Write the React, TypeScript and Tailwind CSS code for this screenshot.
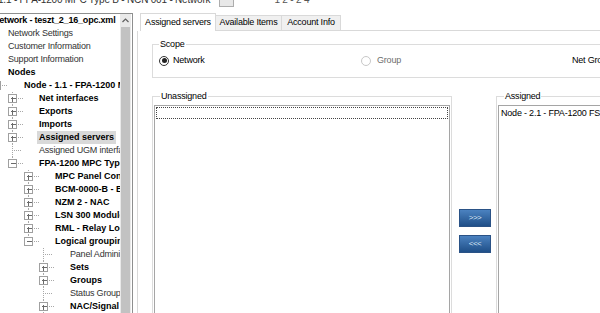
type Conn = 'plus' | 'minus' | 'leaf' | 'none';
type Span = 'full' | 'top' | 'none';

interface TreeRow {
  text: string;
  level: number;
  conn: Conn;
  span: Span;
  bold: boolean;
  selected?: boolean;
}

// text start x per level, and connector center (textX - 27)
const textX: Record<number, number> = { 0: 0, 1: 8, 2: 24, 3: 39, 4: 55, 5: 70 };
const connX: Record<number, number> = { 2: -3.5, 3: 12.5, 4: 28.5, 5: 43.5 };

const rows: TreeRow[] = [
  { text: 'Network Settings', level: 1, conn: 'none', span: 'none', bold: false },
  { text: 'Customer Information', level: 1, conn: 'none', span: 'none', bold: false },
  { text: 'Support Information', level: 1, conn: 'none', span: 'none', bold: false },
  { text: 'Nodes', level: 1, conn: 'none', span: 'none', bold: true },
  { text: 'Node - 1.1 - FPA-1200 MPC Type B', level: 2, conn: 'minus', span: 'none', bold: true },
  { text: 'Net interfaces', level: 3, conn: 'plus', span: 'full', bold: true },
  { text: 'Exports', level: 3, conn: 'plus', span: 'full', bold: true },
  { text: 'Imports', level: 3, conn: 'plus', span: 'full', bold: true },
  { text: 'Assigned servers', level: 3, conn: 'plus', span: 'full', bold: true, selected: true },
  { text: 'Assigned UGM interfaces', level: 3, conn: 'leaf', span: 'full', bold: false },
  { text: 'FPA-1200 MPC Type B', level: 3, conn: 'minus', span: 'top', bold: true },
  { text: 'MPC Panel Controller', level: 4, conn: 'plus', span: 'full', bold: true },
  { text: 'BCM-0000-B - Battery', level: 4, conn: 'plus', span: 'full', bold: true },
  { text: 'NZM 2 - NAC', level: 4, conn: 'plus', span: 'full', bold: true },
  { text: 'LSN 300 Module', level: 4, conn: 'plus', span: 'full', bold: true },
  { text: 'RML - Relay Loop', level: 4, conn: 'plus', span: 'full', bold: true },
  { text: 'Logical grouping', level: 4, conn: 'minus', span: 'top', bold: true },
  { text: 'Panel Administration', level: 5, conn: 'leaf', span: 'full', bold: false },
  { text: 'Sets', level: 5, conn: 'plus', span: 'full', bold: true },
  { text: 'Groups', level: 5, conn: 'plus', span: 'full', bold: true },
  { text: 'Status Groups', level: 5, conn: 'leaf', span: 'full', bold: false },
  { text: 'NAC/Signal', level: 5, conn: 'plus', span: 'full', bold: true },
];

function Connector({ row }: { row: TreeRow }) {
  const w = textX[row.level];
  const cx = connX[row.level];
  return (
    <svg width={w} height={13} className="shrink-0" shapeRendering="crispEdges">
      {cx !== undefined && row.span !== 'none' && (
        <line x1={cx} y1={0} x2={cx} y2={row.span === 'full' ? 13 : 6.5} stroke="#a8a8a8" strokeDasharray="1 1" />
      )}
      {cx !== undefined && row.conn === 'leaf' && (
        <line x1={cx + 1} y1={6.5} x2={cx + 9} y2={6.5} stroke="#a8a8a8" strokeDasharray="1 1" />
      )}
      {cx !== undefined && (row.conn === 'plus' || row.conn === 'minus') && (
        <g>
          <line x1={cx + 5} y1={6.5} x2={cx + 10} y2={6.5} stroke="#a8a8a8" strokeDasharray="1 1" />
          <rect x={cx - 4} y={2.5} width={8} height={8} fill="#fff" stroke="#a0a0a0" />
          <line x1={cx - 2} y1={6.5} x2={cx + 3} y2={6.5} stroke="#6a6a6a" />
          {row.conn === 'plus' && <line x1={cx} y1={4.5} x2={cx} y2={9.5} stroke="#6a6a6a" />}
        </g>
      )}
    </svg>
  );
}

function Radio({ checked, disabled }: { checked?: boolean; disabled?: boolean }) {
  return (
    <span
      className={`flex h-[10px] w-[10px] shrink-0 items-center justify-center rounded-full border bg-white ${
        disabled ? 'border-[#c8c8c8]' : 'border-[#333]'
      }`}>
      {checked && <span className="h-[5px] w-[5px] rounded-full bg-[#222]" />}
    </span>
  );
}

function MoveButton({ label }: { label: string }) {
  return (
    <div className="flex h-[18px] w-[32px] items-center justify-center border border-[#2a5286] bg-gradient-to-b from-[#4b82c0] to-[#1f4f88] text-[8px] tracking-[-0.5px] text-[#dbe6f5]">
      {label}
    </div>
  );
}

export default function App() {
  return (
    <div className="h-[313px] w-[600px] overflow-hidden bg-white font-['Liberation_Sans',Arial,sans-serif] text-[9px] tracking-[-0.2px] text-black">
      {/* clipped caption strip */}
      <div className="flex h-[13px] items-start overflow-hidden">
        <div className="-mt-[8px] flex items-center whitespace-nowrap text-[10px]">
          <span className="ml-[-2px] text-[#333]">1.1 - FPA-1200 MPC Type B - NCN 001 - Network</span>
          <span className="ml-[9px] h-[15px] w-[15px] border border-[#adadad] bg-[#e8e8e8]" />
          <span className="ml-[40px] text-[#555]">1 2 - 2 4</span>
          <span className="ml-[10px] text-[#999]">'</span>
        </div>
      </div>

      <div className="flex h-[300px]">
        {/* tree */}
        <div className="flex w-[133px] shrink-0 border-t border-r border-[#8e8f8f]">
          <div className="w-[120px] overflow-hidden whitespace-nowrap">
            <div className="flex h-[13px] items-center font-bold">
              <span className="-ml-[7px]">Network - teszt_2_16_opc.xml</span>
            </div>
            {rows.map((r, i) => (
              <div key={i} className="flex h-[13px] items-center">
                <Connector row={r} />
                <span
                  className={`${r.bold ? 'font-bold tracking-normal' : 'text-[#333]'} ${
                    r.selected ? '-ml-[2px] bg-[#d9d9d9] px-[2px]' : ''
                  }`}>
                  {r.text}
                </span>
              </div>
            ))}
          </div>
          <div className="flex w-[11px] flex-col bg-[#e9e9e9]">
            <div className="flex h-[13px] items-center justify-center">
              <svg width="7" height="5" viewBox="0 0 7 5">
                <path d="M0.5 4 L3.5 1 L6.5 4" fill="none" stroke="#606060" strokeWidth="1.2" />
              </svg>
            </div>
            <div className="mx-[1px] flex-1 bg-[#c2c2c2]" />
          </div>
        </div>

        {/* tab control */}
        <div className="ml-[4px] flex flex-1 flex-col">
          <div className="flex items-end pl-[3px]">
            <div className="flex h-[18px] w-[76px] items-center justify-center border border-b-0 border-[#d9d9d9] bg-white">
              Assigned servers
            </div>
            <div className="flex h-[16px] w-[66px] items-center justify-center border border-l-0 border-[#d9d9d9] bg-[#f0f0f0]">
              Available Items
            </div>
            <div className="flex h-[16px] w-[59px] items-center justify-center border border-l-0 border-[#d9d9d9] bg-[#f0f0f0]">
              Account Info
            </div>
            <div className="flex-1 border-b border-[#d9d9d9]" />
          </div>

          <div className="flex-1 border-l border-[#d9d9d9] pt-[8px] pl-[14px]">
            <fieldset className="h-[39px] w-[470px] border border-[#dcdcdc] px-[6px]">
              <legend className="px-[1px] leading-[11px]">Scope</legend>
              <div className="mt-[4px] flex items-center">
                <div className="flex w-[202px] items-center gap-[4px]">
                  <Radio checked />
                  <span>Network</span>
                </div>
                <div className="flex w-[211px] items-center gap-[6px]">
                  <Radio disabled />
                  <span className="text-[#6d6d6d]">Group</span>
                </div>
                <span>Net Group</span>
              </div>
            </fieldset>

            <div className="mt-[13px] flex">
              <fieldset className="h-[230px] w-[300px] border border-[#dcdcdc] px-[1px]">
                <legend className="ml-[6px] px-[1px] leading-[11px]">Unassigned</legend>
                <div className="mt-[3px] h-[220px] border border-[#a5a5a5] bg-white p-[1px]">
                  <div className="h-[12px] border border-dotted border-[#444]" />
                </div>
              </fieldset>

              <div className="flex w-[44px] flex-col items-center gap-[8px] pt-[118px] pl-[2px]">
                <MoveButton label=">>>" />
                <MoveButton label="<<<" />
              </div>

              <fieldset className="h-[230px] w-[120px] border border-[#dcdcdc] px-[1px]">
                <legend className="ml-[6px] px-[1px] leading-[11px]">Assigned</legend>
                <div className="mt-[3px] h-[220px] border border-[#a5a5a5] bg-white pl-[2px] pt-[1px] whitespace-nowrap">
                  Node - 2.1 - FPA-1200 FSP
                </div>
              </fieldset>
            </div>
          </div>
        </div>
      </div>
    </div>
  );
}
